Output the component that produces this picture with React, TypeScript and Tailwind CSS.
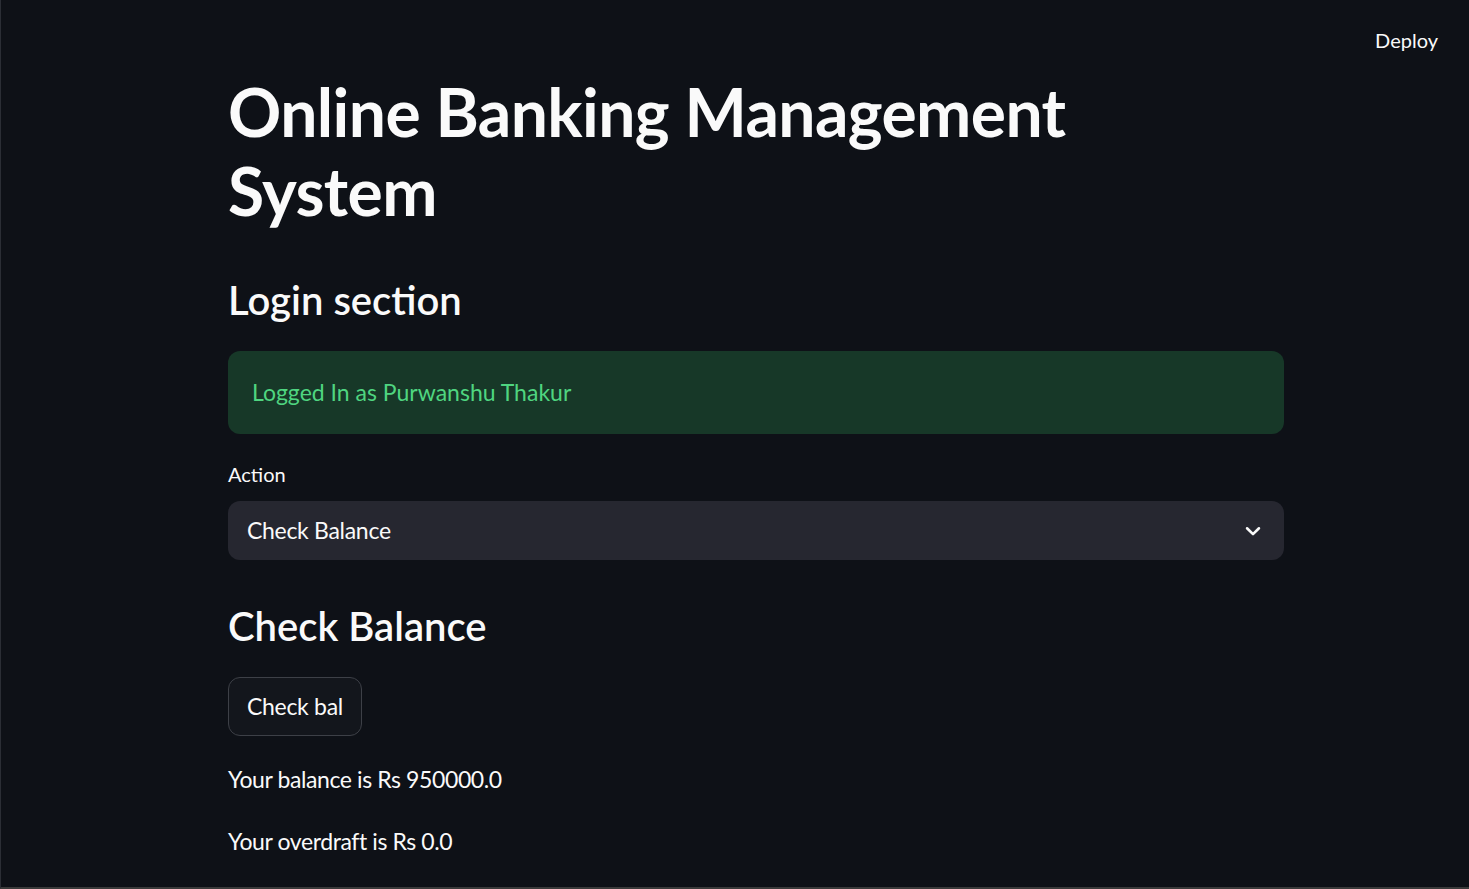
import React from 'react';

function Chevron() {
  return (
    <svg width="22" height="22" viewBox="0 0 24 24" fill="none" stroke="#fafafa" strokeWidth="2.8" strokeLinecap="round" strokeLinejoin="round">
      <path d="M5.5 9l6.5 6.5L18.5 9" />
    </svg>
  );
}

export default function App() {
  const font = { fontFamily: 'Lato, "Noto Sans", sans-serif' };

  return (
    <div
      className="relative h-[889px] w-full overflow-hidden bg-[#0e1117] text-[#fafafa] border-l border-b-2 border-l-[#2b2e35] border-b-[#3a3a3a]"
      style={font}
    >
      {/* top bar */}
      <div className="absolute right-[31px] top-[25px] text-[20px] leading-[30px]">Deploy</div>

      <div className="ml-[227px] flex w-[1056px] flex-col pt-[72px]">
        <h1 className="text-[66px] font-bold leading-[79px] tracking-[-0.6px]">
          Online Banking Management
          <br />
          System
        </h1>

        <h3 className="mt-[45px] text-[40px] font-semibold leading-[50px]">Login section</h3>

        <div className="mt-[26px] rounded-xl bg-[#173828] px-6 pt-[23px] pb-[24px] text-[23px] leading-[36px] text-[#4fd580]">
          Logged In as Purwanshu Thakur
        </div>

        <label className="mt-[25px] text-[20px] leading-[31px]">Action</label>

        <div className="mt-[11px] flex h-[59px] items-center justify-between rounded-xl bg-[#262730] pl-[19px] pr-[20px] text-[23px] tracking-[-0.3px]">
          <span>Check Balance</span>
          <Chevron />
        </div>

        <h3 className="mt-[41px] text-[40px] font-semibold leading-[50px]">Check Balance</h3>

        <div className="mt-[26px]">
          <button className="flex h-[59px] items-center rounded-xl border border-[#3d4047] bg-[#13161c] px-[18px] text-[23px] tracking-[-0.3px]">
            Check bal
          </button>
        </div>

        <p className="mt-[25px] text-[23px] leading-[36px] tracking-[-0.4px]">Your balance is Rs 950000.0</p>
        <p className="mt-[26px] text-[23px] leading-[36px] tracking-[-0.4px]">Your overdraft is Rs 0.0</p>
      </div>
    </div>
  );
}
